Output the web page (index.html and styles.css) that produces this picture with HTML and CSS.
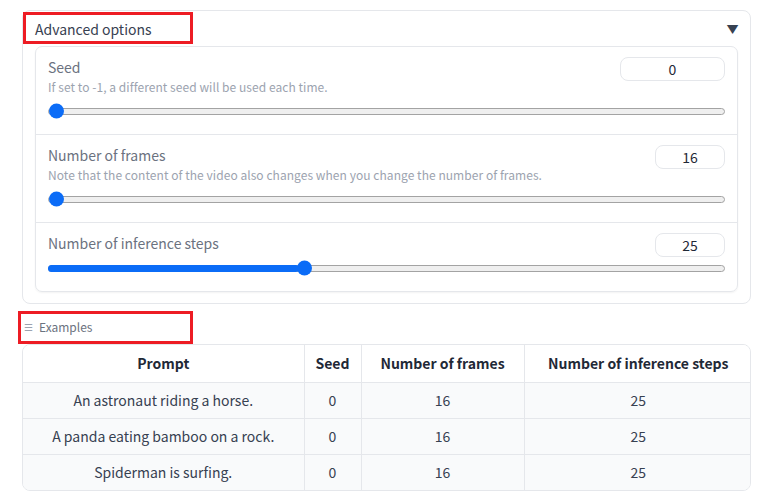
FILE: index.html
```html
<!DOCTYPE html>
<html>
<head>
<meta charset="utf-8">
<link rel="stylesheet" href="styles.css">
</head>
<body>
<div class="page">
  <section class="accordion">
    <div class="acc-head">
      <span class="acc-title">Advanced options</span>
      <span class="caret">▼</span>
      <span class="mark mark-1"></span>
    </div>
    <div class="panel">
      <div class="row">
        <div class="row-top">
          <div class="texts">
            <div class="label">Seed</div>
            <div class="info">If set to -1, a different seed will be used each time.</div>
          </div>
          <div class="num wide">0</div>
        </div>
        <div class="slider"><div class="track"><div class="fill" style="width:0%"></div><div class="thumb" style="left:0%"></div></div></div>
      </div>
      <div class="row">
        <div class="row-top">
          <div class="texts">
            <div class="label">Number of frames</div>
            <div class="info">Note that the content of the video also changes when you change the number of frames.</div>
          </div>
          <div class="num">16</div>
        </div>
        <div class="slider"><div class="track"><div class="fill" style="width:0%"></div><div class="thumb" style="left:0%"></div></div></div>
      </div>
      <div class="row">
        <div class="row-top">
          <div class="texts">
            <div class="label">Number of inference steps</div>
          </div>
          <div class="num">25</div>
        </div>
        <div class="slider"><div class="track"><div class="fill" style="width:37.2%"></div><div class="thumb" style="left:36.7%"></div></div></div>
      </div>
    </div>
  </section>

  <div class="examples-head">
    <span class="ex-icon">☰</span><span class="ex-title">Examples</span>
    <span class="mark mark-2"></span>
  </div>

  <div class="table-wrap">
    <table class="examples">
      <thead>
        <tr><th class="c1">Prompt</th><th class="c2">Seed</th><th class="c3">Number of frames</th><th class="c4">Number of inference steps</th></tr>
      </thead>
      <tbody>
        <tr><td>An astronaut riding a horse.</td><td>0</td><td>16</td><td>25</td></tr>
        <tr><td>A panda eating bamboo on a rock.</td><td>0</td><td>16</td><td>25</td></tr>
        <tr><td>Spiderman is surfing.</td><td>0</td><td>16</td><td>25</td></tr>
      </tbody>
    </table>
  </div>
</div>
</body>
</html>
```
FILE: styles.css
```css
* { box-sizing: border-box; }
html, body { margin: 0; padding: 0; background: #ffffff; }
body {
  font-family: "Noto Sans CJK KR", "Noto Sans", sans-serif;
  color: #374151;
}
.page {
  padding: 10px 13px 0 22px;
  width: 764px;
}
.accordion {
  border: 1px solid #e5e7eb;
  border-radius: 8px;
  padding: 0 12px 10px 12px;
  height: 294px;
}
.acc-head {
  position: relative;
  display: flex;
  justify-content: space-between;
  align-items: center;
  height: 35px;
}
.acc-title { font-size: 14px; color: #374151; }
.caret { font-size: 11px; color: #374151; transform: scaleX(1.1); margin-top: 1px; }
.mark {
  position: absolute;
  border: 3px solid #ed1c24;
  pointer-events: none;
}
.mark-1 { left: -12px; top: 1px; width: 170px; height: 32px; }
.panel {
  border: 1px solid #e5e7eb;
  border-radius: 7px;
  box-shadow: 0 1px 2px rgba(0,0,0,0.05);
}
.row {
  padding: 10px 12px 13px 12px;
  border-top: 1px solid #e5e7eb;
}
.row:first-child { border-top: none; }
.row-top {
  display: flex;
  justify-content: space-between;
  align-items: flex-start;
}
.label { font-size: 14px; line-height: 20px; color: #6b7280; }
.info { font-size: 12px; line-height: 18px; margin-top: 1px; color: #9ca3af; letter-spacing: 0.05px; }
.num {
  width: 70px;
  height: 24px;
  margin-bottom: -4px;
  border: 1px solid #e5e7eb;
  border-radius: 8px;
  font-size: 14px;
  line-height: 22px;
  text-align: center;
  color: #1f2937;
}
.num.wide { width: 105px; }
.slider {
  height: 20px;
  margin-top: 5px;
  display: flex;
  align-items: center;
}
.track {
  position: relative;
  width: 100%;
  height: 7px;
  background: #efefef;
  border: 1px solid #a3a3a3;
  border-radius: 4px;
}
.fill {
  position: absolute;
  left: -1px; top: -1px; bottom: -1px;
  background: #0b6cf7;
  border-radius: 4px;
}
.thumb {
  position: absolute;
  top: 50%;
  width: 15px; height: 15px;
  transform: translate(0, -50%);
  border-radius: 50%;
  background: #0b6cf7;
}
.examples-head {
  position: relative;
  height: 40px;
  display: flex;
  align-items: center;
  padding-left: 2px;
  padding-top: 4px;
  font-size: 12px;
  color: #6b7280;
}
.ex-icon { font-size: 10px; margin-right: 6px; color: #9ca3af; }
.mark-2 { left: -4px; top: 7px; width: 175px; height: 33px; }
.table-wrap {
  border: 1px solid #e5e7eb;
  border-radius: 8px;
  overflow: hidden;
  width: 729px;
}
.examples {
  width: 100%;
  border-collapse: collapse;
  font-size: 14px;
  table-layout: fixed;
}
.examples th, .examples td {
  text-align: center;
  height: 36px;
  padding: 0 8px;
  border-left: 1px solid #e5e7eb;
  border-top: 1px solid #e5e7eb;
}
.examples th:first-child, .examples td:first-child { border-left: none; }
.examples thead th { height: 37px; border-top: none; font-weight: 700; color: #1f2937; background: #ffffff; }
.examples tbody td { background: #f9fafb; color: #374151; }
.c1 { width: 281px; }
.c2 { width: 57px; }
.c3 { width: 163px; }
.c4 { width: 228px; }
```
